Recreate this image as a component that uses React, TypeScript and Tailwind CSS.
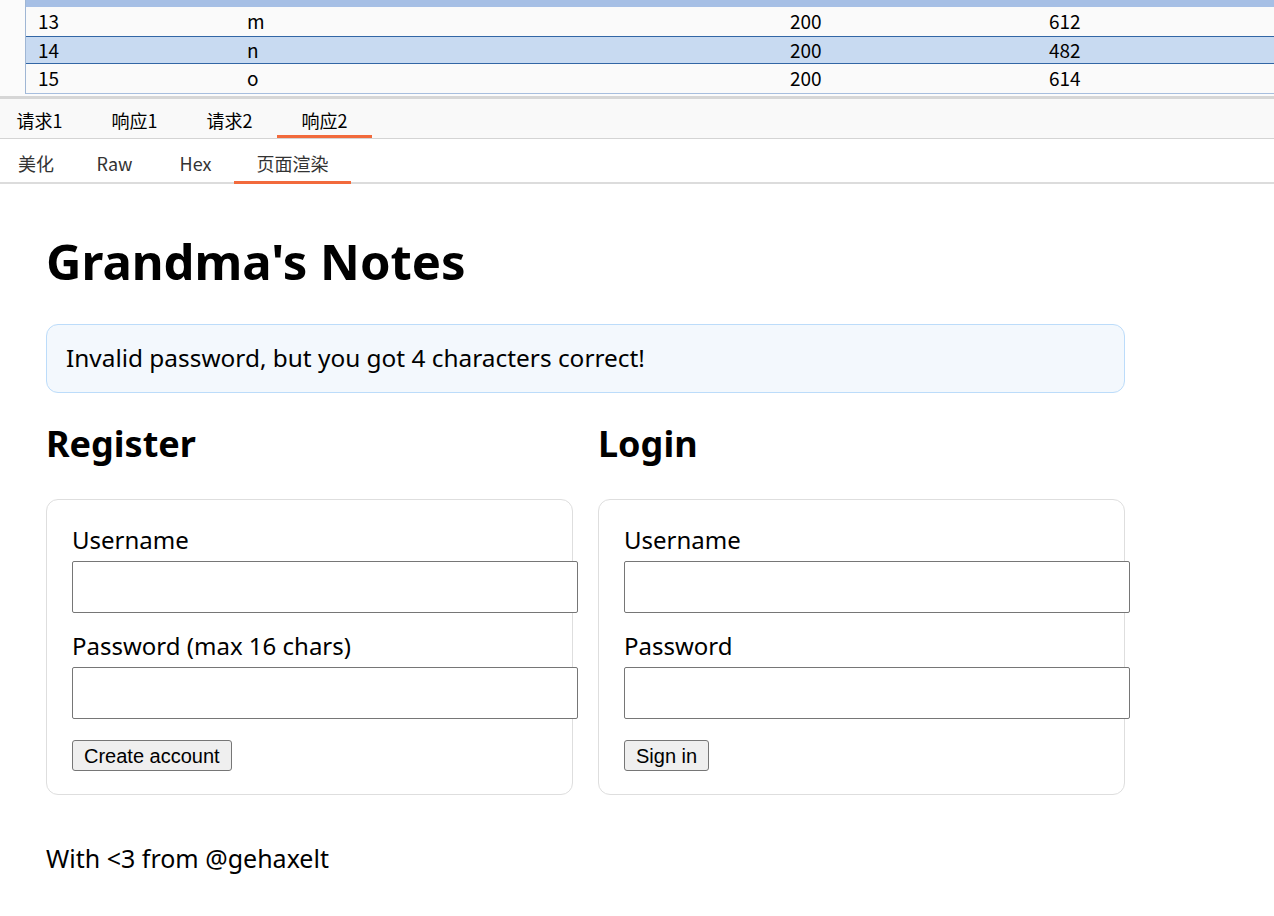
import React from 'react';

const rows = [
  { id: '13', p: 'm', status: '200', len: '612', selected: false, h: 'h-[29px]' },
  { id: '14', p: 'n', status: '200', len: '482', selected: true, h: 'h-[28px]' },
  { id: '15', p: 'o', status: '200', len: '614', selected: false, h: 'h-[29px]' },
];

const cjk = { fontFamily: '"Microsoft YaHei", "Noto Sans CJK SC", "Noto Sans", sans-serif' };
const page = { fontFamily: '"Noto Sans", "Open Sans", sans-serif' };

function Field({ label }: { label: string }) {
  return (
    <div className="flex flex-col">
      <label className="text-[24px] leading-[36px] text-black">{label}</label>
      <input className="mt-[3px] h-[52px] w-[506px] border-[1.5px] border-[#767676] rounded-[2px] bg-white" />
    </div>
  );
}

function Card({ title, pwLabel, button }: { title: string; pwLabel: string; button: string }) {
  return (
    <div className="flex flex-col">
      <h2 className="mt-[31px] text-[36px] font-bold leading-[40px] mb-[35px] text-black">{title}</h2>
      <div className="border border-[#dedede] rounded-[12px] px-[25px] pt-[22px] pb-[23px] flex flex-col gap-[15px]">
        <Field label="Username" />
        <Field label={pwLabel} />
        <div>
          <button className="mt-[6px] h-[31px] px-[11px] border border-[#767676] rounded-[3px] bg-[#efefef] text-[20px] leading-[20px] text-black" style={{ fontFamily: '"Liberation Sans", Arial, sans-serif' }}>
            {button}
          </button>
        </div>
      </div>
    </div>
  );
}

export default function App() {
  return (
    <div className="w-[1274px] h-[916px] bg-white overflow-hidden">
      {/* table tail */}
      <div className="flex h-[99px] border-b-[3px] border-[#d6d6d6] bg-[#fbfbfb]" style={cjk}>
        <div className="w-[25px]" />
        <div className="flex-1 h-[94px] border-l border-[#9fb6d4] bg-[#fafafa] border-b border-b-[#a7bede]">
          <div className="h-[7px] bg-[#a6bfe5]" />
          {rows.map((r) => (
            <div
              key={r.id}
              className={
                r.selected
                  ? `flex items-center ${r.h} bg-[#c8daf1] border-y border-[#3266a5] text-[19px] text-black`
                  : `flex items-center ${r.h} text-[19px] text-black`
              }
            >
              <span className="w-[221px] pl-[12px]">{r.id}</span>
              <span className="w-[543px]">{r.p}</span>
              <span className="w-[259px]">{r.status}</span>
              <span>{r.len}</span>
            </div>
          ))}
        </div>
      </div>

      {/* outer tabs */}
      <div className="flex h-[40px] bg-[#f9f9f9] border-b border-[#d4d4d4] text-[18px] text-black" style={cjk}>
        <div className="flex ml-[-8px]">
          {['请求1', '响应1', '请求2', '响应2'].map((t, i) => (
            <div key={t} className="w-[95px] flex justify-center relative">
              <span className="pt-[8px]">{t}</span>
              {i === 3 && <div className="absolute bottom-0 left-0 right-0 h-[3px] bg-[#f26a3c]" />}
            </div>
          ))}
        </div>
      </div>

      {/* inner tabs */}
      <div className="flex h-[45px] bg-white border-b-2 border-[#dcdcdc] text-[18px] text-[#333]" style={cjk}>
        <div className="w-[72px] flex justify-center pt-[11px]">美化</div>
        <div className="w-[85px] flex justify-center pt-[11px]">Raw</div>
        <div className="w-[77px] flex justify-center pt-[11px]">Hex</div>
        <div className="w-[117px] flex justify-center pt-[11px] relative">
          页面渲染
          <div className="absolute bottom-[-2px] left-0 right-0 h-[3px] bg-[#f26a3c]" />
        </div>
      </div>

      {/* rendered page */}
      <div className="pl-[46px] w-[1125px] pt-[37px]" style={page}>
        <h1 className="text-[49px] font-bold leading-[80px] text-black">Grandma's Notes</h1>
        <div className="mt-[23px] h-[69px] border border-[#bcdcfa] bg-[#f3f8fd] rounded-[12px] flex items-center px-[19px] text-[24.4px] text-black">
          Invalid password, but you got 4 characters correct!
        </div>
        <div className="grid grid-cols-2 gap-[25px]">
          <Card title="Register" pwLabel="Password (max 16 chars)" button="Create account" />
          <Card title="Login" pwLabel="Password" button="Sign in" />
        </div>
        <p className="mt-[45px] text-[25px] leading-[36px] text-black">With &lt;3 from @gehaxelt</p>
      </div>
    </div>
  );
}
